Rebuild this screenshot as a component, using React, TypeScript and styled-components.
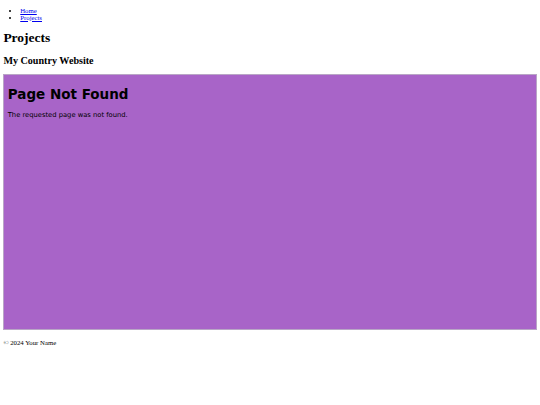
import React from 'react';
import styled, { createGlobalStyle } from 'styled-components';

const GlobalStyle = createGlobalStyle`
	html, body {
		background: #ffffff;
	}

	body {
		margin: 0 3.375px 3.375px;
		font-family: 'Liberation Serif', 'Times New Roman', serif;
		font-size: 6.75px;
		color: #000000;
	}
`;

const App = () => {
	return (
		<>
			<GlobalStyle />
			<HeaderStyle>
				<NavListStyle>
					<li>
						<a href="#">Home</a>
					</li>
					<li>
						<a href="#">Projects</a>
					</li>
				</NavListStyle>
				<PageTitleStyle>Projects</PageTitleStyle>
				<SiteTitleStyle>My Country Website</SiteTitleStyle>
			</HeaderStyle>
			<ContentBoxStyle>
				<h1>Page Not Found</h1>
				<p>The requested page was not found.</p>
			</ContentBoxStyle>
			<FooterStyle>
				<p>© 2024 Your Name</p>
			</FooterStyle>
		</>
	);
};

export default App;

export const HeaderStyle = styled.header`
	display: block;
`;

export const NavListStyle = styled.ul`
	margin: 6.75px 0;
	padding-left: 16.875px;
	list-style: disc;

	a {
		color: #0000ee;
		text-decoration: underline;
	}
`;

export const PageTitleStyle = styled.h1`
	font-size: 13.5px;
	font-weight: 700;
	margin: 9.045px 0;
`;

export const SiteTitleStyle = styled.h2`
	font-size: 10.125px;
	font-weight: 700;
	margin: 8.6px 0;
`;

export const ContentBoxStyle = styled.main`
	box-sizing: border-box;
	height: 256px;
	padding: 1.5px 3.375px 3.375px;
	border: 1px solid #b9a6c6;
	background: #a864c8;
	font-family: 'DejaVu Sans', Verdana, sans-serif;

	h1 {
		font-size: 13.5px;
		font-weight: 700;
		margin: 9.045px 0;
	}

	p {
		font-size: 6.75px;
		margin: 6.75px 0;
	}
`;

export const FooterStyle = styled.footer`
	p {
		margin: 9px 0 6.75px;
	}
`;
